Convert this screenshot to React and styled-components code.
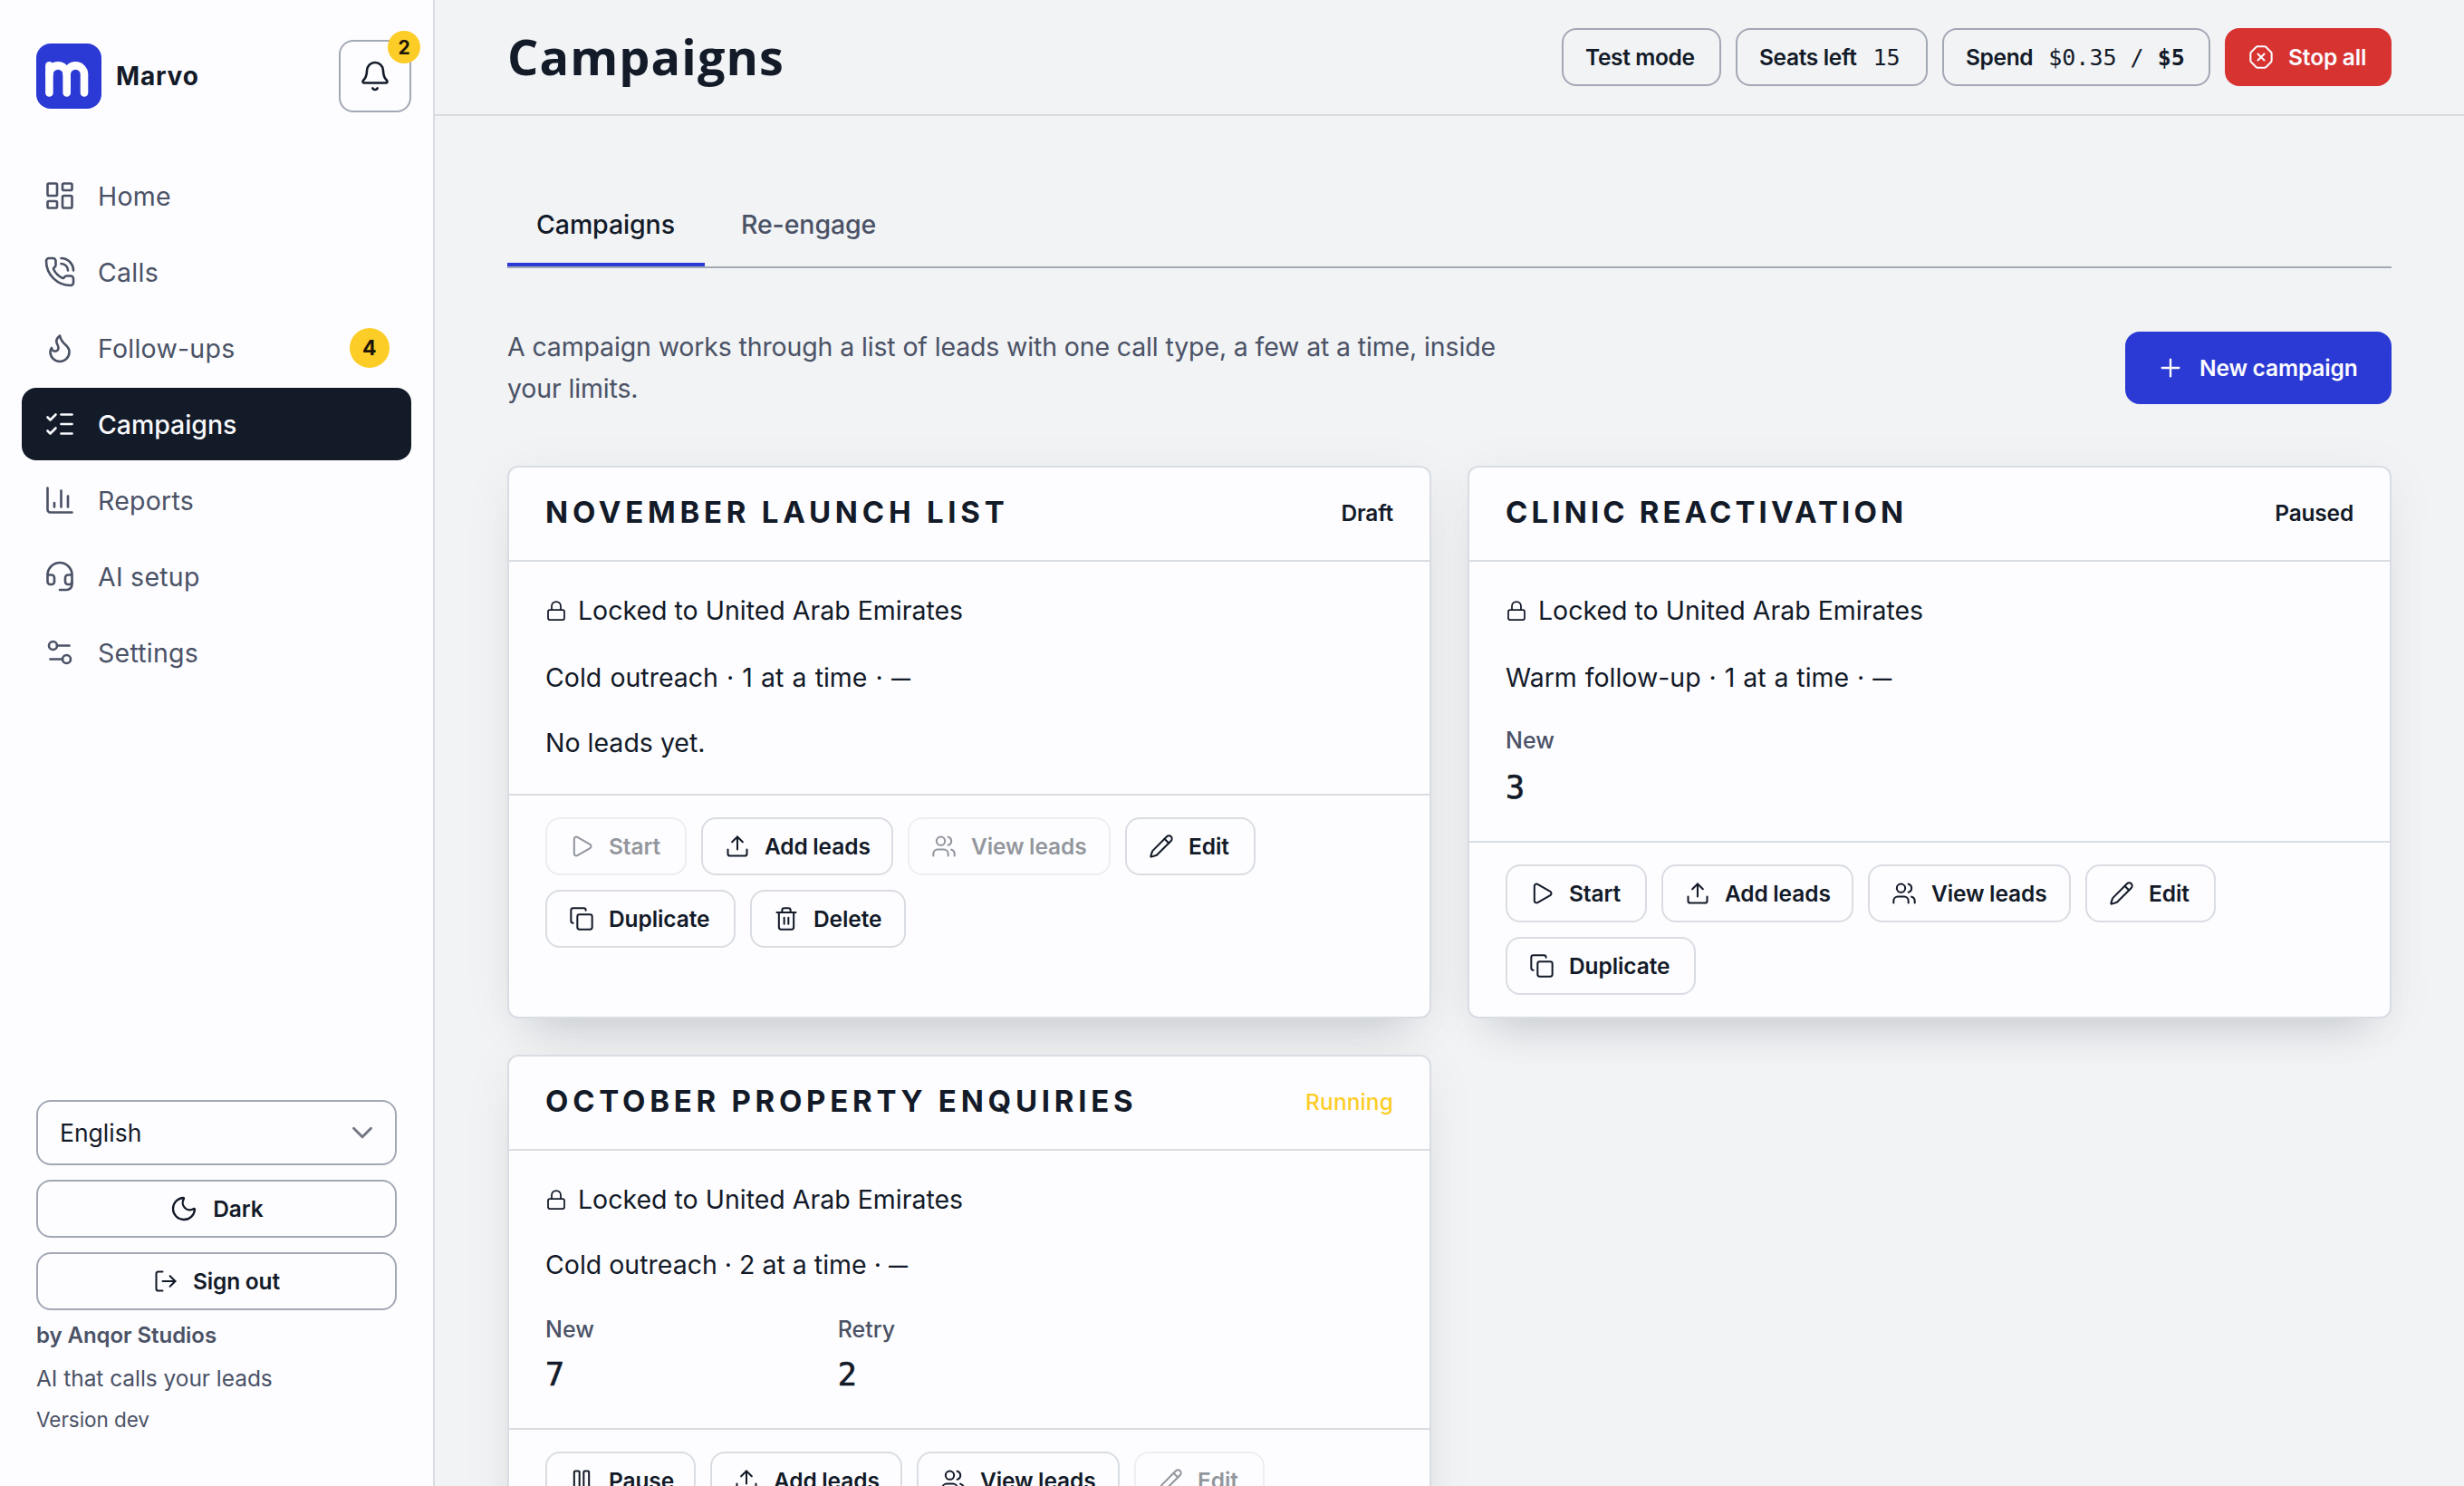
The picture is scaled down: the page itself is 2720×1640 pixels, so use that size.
import React from "react";
import styled, { createGlobalStyle, css } from "styled-components";
import {
  Bell,
  ChartColumn,
  ChevronDown,
  Copy,
  Flame,
  Headset,
  LayoutDashboard,
  ListChecks,
  Lock,
  LogOut,
  Moon,
  OctagonX,
  Pause,
  Pencil,
  PhoneCall,
  Play,
  Plus,
  Settings2,
  Trash2,
  Upload,
  Users,
} from "lucide-react";

const c = {
  ink: "#131a28",
  muted: "#4b5266",
  page: "#f1f3f5",
  surface: "#fdfdff",
  line: "#d9dde3",
  lineStrong: "#a3a8b5",
  brand: "#2b3ad4",
  danger: "#d73331",
  accent: "#fccd27",
};

const sans = `Inter, "Liberation Sans", sans-serif`;
const mono = `"DejaVu Sans Mono", "Liberation Mono", monospace`;

const GlobalStyle = createGlobalStyle`
  *, *::before, *::after { box-sizing: border-box; }
  body { margin: 0; background: ${c.page}; color: ${c.ink}; font-family: ${sans}; }
  button { font: inherit; color: inherit; background: none; margin: 0; }
  p, h1, h2, dl, dt, dd { margin: 0; }
  svg { flex: none; display: block; }
`;

const Shell = styled.div`
  display: grid;
  grid-template-columns: 480px 1fr;
  grid-template-rows: minmax(0, 1fr);
  height: 1640px;
  overflow: hidden;
`;

/* Sidebar */

const Sidebar = styled.aside`
  display: flex;
  flex-direction: column;
  background: ${c.surface};
  border-right: 2px solid ${c.line};
`;

const BrandRow = styled.div`
  display: flex;
  align-items: center;
  gap: 16px;
  padding: 44px 24px 0 40px;
`;

const BrandName = styled.span`
  flex: 1;
  font-size: 28px;
  font-weight: 700;
  letter-spacing: 0.8px;
`;

const BellButton = styled.button`
  position: relative;
  display: grid;
  place-items: center;
  width: 80px;
  height: 80px;
  padding: 0;
  border: 2px solid ${c.lineStrong};
  border-radius: 16px;
`;

const Count = styled.span`
  display: grid;
  place-items: center;
  width: ${(p) => p.$size}px;
  height: ${(p) => p.$size}px;
  border-radius: 50%;
  background: ${c.accent};
  color: #1c1608;
  font-weight: 700;
  font-size: ${(p) => p.$font}px;
  line-height: 1;
  ${(p) =>
    p.$floating &&
    css`
      position: absolute;
      top: -12px;
      right: -12px;
    `}
`;

const Nav = styled.nav`
  display: flex;
  flex-direction: column;
  gap: 4px;
  padding: 52px 24px 0;
`;

const NavItem = styled.a`
  display: flex;
  align-items: center;
  gap: 24px;
  height: 80px;
  padding: 0 24px;
  border-radius: 16px;
  font-size: 28.5px;
  letter-spacing: 0.25px;
  color: ${c.muted};
  ${(p) =>
    p.$active &&
    css`
      background: ${c.ink};
      color: #f7f8fb;
      font-weight: 500;
      letter-spacing: -0.05px;
    `}
`;

const NavLabel = styled.span`
  flex: 1;
`;

const SidebarFoot = styled.div`
  display: flex;
  flex-direction: column;
  gap: 16px;
  margin-top: auto;
  padding: 0 40px 52px;
`;

const LanguageSelect = styled.button`
  display: flex;
  align-items: center;
  justify-content: space-between;
  height: 72px;
  padding: 0 17px 0 24px;
  border: 2px solid ${c.lineStrong};
  border-radius: 16px;
  font-size: 26.5px;
  svg {
    color: #737783;
  }
`;

const Credits = styled.div`
  display: flex;
  flex-direction: column;
  color: ${c.muted};
  margin-top: -12px;
`;

const Credit = styled.span`
  font-size: ${(p) => p.$size}px;
  font-weight: ${(p) => p.$weight || 400};
  line-height: ${(p) => p.$line}px;
  letter-spacing: -0.05px;
`;

/* Buttons and pills */

const Button = styled.button`
  display: flex;
  align-items: center;
  justify-content: ${(p) => (p.$center ? "center" : "flex-start")};
  gap: 16px;
  height: 64px;
  width: ${(p) => (p.$width ? `${p.$width}px` : "auto")};
  padding: 0 0 0 ${(p) => (p.$center ? 0 : 24)}px;
  border: 2px solid ${(p) => (p.$strong ? c.lineStrong : c.line)};
  border-radius: 16px;
  font-size: 24.5px;
  font-weight: 600;
  letter-spacing: -0.1px;
  word-spacing: -0.5px;
  white-space: nowrap;
  ${(p) => p.disabled && "opacity: 0.45;"}
  ${(p) =>
    p.$tone &&
    css`
      background: ${p.$tone};
      border-color: ${p.$tone};
      color: #fbfbff;
    `}
`;

const PrimaryButton = styled(Button)`
  height: 80px;
  padding-left: 32px;
`;

const Pill = styled.div`
  display: flex;
  align-items: center;
  gap: ${(p) => p.$gap || 0}px;
  width: ${(p) => p.$width}px;
  height: 64px;
  padding-left: 24px;
  border: 2px solid ${c.lineStrong};
  border-radius: 16px;
  font-size: 24.5px;
  font-weight: 600;
  letter-spacing: -0.35px;
  white-space: nowrap;
`;

const Mono = styled.span`
  font-family: ${mono};
  font-size: 25px;
  font-weight: 400;
  letter-spacing: 0;
`;

/* Main column */

const Main = styled.main`
  display: flex;
  flex-direction: column;
  min-width: 0;
`;

const TopBar = styled.header`
  display: flex;
  align-items: center;
  gap: 16px;
  flex: none;
  height: 128px;
  padding: 0 80px;
  border-bottom: 2px solid ${c.line};
`;

const PageTitle = styled.h1`
  flex: 1;
  font-family: "Open Sans", ${sans};
  font-size: 54px;
  font-weight: 680;
  line-height: 1;
  letter-spacing: 1.1px;
  padding-bottom: 3px;
`;

const Content = styled.div`
  padding: 80px 80px 0;
`;

const Tabs = styled.div`
  display: flex;
  gap: 8px;
  height: 88px;
  border-bottom: 2px solid ${c.lineStrong};
`;

const Tab = styled.div`
  display: flex;
  align-items: center;
  width: ${(p) => p.$width}px;
  padding: 0 0 4px 32px;
  border-bottom: 4px solid ${(p) => (p.$active ? c.brand : "transparent")};
  color: ${(p) => (p.$active ? c.ink : c.muted)};
  font-size: 28.5px;
  font-weight: 500;
  letter-spacing: -0.1px;
`;

const Intro = styled.div`
  display: flex;
  align-items: center;
  justify-content: space-between;
  padding: 64px 0 62px;
`;

const IntroText = styled.p`
  width: 1120px;
  color: ${c.muted};
  font-size: 28.5px;
  line-height: 46px;
  letter-spacing: -0.14px;
`;

const CardGrid = styled.div`
  display: grid;
  grid-template-columns: 1fr 1fr;
  gap: 40px;
`;

const Card = styled.section`
  display: flex;
  flex-direction: column;
  background: ${c.surface};
  border: 2px solid ${c.line};
  border-radius: 12px;
  box-shadow: 0 8px 60px rgba(22, 24, 40, 0.05), 0 32px 48px -30px rgba(22, 24, 40, 0.19);
`;

const CardHead = styled.div`
  display: flex;
  align-items: center;
  justify-content: space-between;
  height: 104px;
  padding: 0 40px 4px;
  border-bottom: 2px solid ${c.line};
`;

const CardTitle = styled.h2`
  font-size: 33px;
  font-weight: 650;
  letter-spacing: ${(p) => p.$tracking}px;
  line-height: 1;
  text-transform: uppercase;
  white-space: nowrap;
`;

const Status = styled.span`
  padding-top: 2px;
  font-size: 24.5px;
  font-weight: ${(p) => (p.$live ? 500 : 600)};
  letter-spacing: ${(p) => (p.$live ? 0.1 : -0.2)}px;
  color: ${(p) => (p.$live ? c.accent : c.ink)};
`;

const CardBody = styled.div`
  padding: 31px 40px 33px;
`;

const Line = styled.p`
  display: flex;
  align-items: center;
  gap: 12px;
  margin-top: ${(p) => p.$gap || 0}px;
  font-size: 28.5px;
  line-height: 46px;
`;

const Summary = styled.p`
  margin-top: ${(p) => p.$gap}px;
  font-size: 28.5px;
  line-height: 46px;
  height: 46px;
  word-spacing: ${(p) => p.$words}px;
`;

const Dash = styled.span`
  font-size: 21px;
  font-weight: 600;
  line-height: 1;
  vertical-align: 2px;
`;

const Stats = styled.dl`
  display: grid;
  grid-template-columns: repeat(3, 1fr);
  gap: 32px;
  padding-bottom: 4px;
  margin-top: ${(p) => p.$gap}px;
`;

const StatLabel = styled.dt`
  color: ${c.muted};
  font-size: 25px;
  font-weight: 500;
  line-height: 36px;
`;

const StatValue = styled.dd`
  padding-top: ${(p) => p.$gap}px;
  font-family: ${mono};
  font-size: 35px;
  line-height: 44px;
  -webkit-text-stroke: 0.7px ${c.ink};
`;

const CardActions = styled.div`
  display: flex;
  flex-wrap: wrap;
  align-content: flex-start;
  gap: 16px;
  flex: 1;
  padding: 24px 40px;
  border-top: 2px solid ${c.line};
`;

const LogoMark = () => (
  <svg width="72" height="72" viewBox="0 0 72 72" aria-hidden="true">
    <rect width="72" height="72" rx="16" fill={c.brand} />
    <g fill="none" stroke="#fff" strokeWidth="8.6" strokeLinecap="round">
      <path d="M14.4 54.4V24.4" />
      <path d="M14.4 34a9.65 9.65 0 0 1 19.3 0v20.4" />
      <path d="M33.7 34a9.65 9.65 0 0 1 19.3 0v20.4" />
    </g>
  </svg>
);

const navItems = [
  { icon: LayoutDashboard, label: "Home" },
  { icon: PhoneCall, label: "Calls" },
  { icon: Flame, label: "Follow-ups", count: 4 },
  { icon: ListChecks, label: "Campaigns", active: true },
  { icon: ChartColumn, label: "Reports" },
  { icon: Headset, label: "AI setup" },
  { icon: Settings2, label: "Settings" },
];

const actions = {
  start: { icon: Play, label: "Start", width: 156 },
  pause: { icon: Pause, label: "Pause", width: 166 },
  add: { icon: Upload, label: "Add leads", width: 212 },
  view: { icon: Users, label: "View leads", width: 224 },
  edit: { icon: Pencil, label: "Edit", width: 144 },
  duplicate: { icon: Copy, label: "Duplicate", width: 210 },
  remove: { icon: Trash2, label: "Delete", width: 172 },
};

const campaigns = [
  {
    name: "November launch list",
    tracking: 4.75,
    status: "Draft",
    summary: "Cold outreach · 1 at a time ·",
    words: 1.1,
    gaps: [28, 26],
    stats: [],
    actions: ["start", "add", "view", "edit", "duplicate", "remove"],
    disabled: ["start", "view"],
  },
  {
    name: "Clinic reactivation",
    tracking: 4.1,
    status: "Paused",
    summary: "Warm follow-up · 1 at a time ·",
    words: 0.9,
    gaps: [28, 28, 12],
    stats: [["New", 3]],
    actions: ["start", "add", "view", "edit", "duplicate"],
    disabled: [],
  },
  {
    name: "October property enquiries",
    tracking: 4.73,
    status: "Running",
    live: true,
    summary: "Cold outreach · 2 at a time ·",
    words: 0,
    gaps: [26, 30, 10],
    stats: [["New", 7], ["Retry", 2]],
    actions: ["pause", "add", "view", "edit"],
    disabled: ["edit"],
  },
];

function CampaignCard({ data }) {
  return (
    <Card>
      <CardHead>
        <CardTitle $tracking={data.tracking}>{data.name}</CardTitle>
        <Status $live={data.live}>{data.status}</Status>
      </CardHead>
      <CardBody>
        <Line>
          <Lock size={24} strokeWidth={1.75} />
          Locked to United Arab Emirates
        </Line>
        <Summary $gap={data.gaps[0]} $words={data.words}>
          {data.summary} <Dash>—</Dash>
        </Summary>
        {data.stats.length === 0 ? (
          <Line $gap={data.gaps[1]}>No leads yet.</Line>
        ) : (
          <Stats $gap={data.gaps[1]}>
            {data.stats.map(([label, value]) => (
              <div key={label}>
                <StatLabel>{label}</StatLabel>
                <StatValue $gap={data.gaps[2]}>{value}</StatValue>
              </div>
            ))}
          </Stats>
        )}
      </CardBody>
      <CardActions>
        {data.actions.map((key) => {
          const { icon: Icon, label, width } = actions[key];
          return (
            <Button key={key} $width={width} disabled={data.disabled.includes(key)}>
              <Icon size={28} strokeWidth={1.75} />
              {label}
            </Button>
          );
        })}
      </CardActions>
    </Card>
  );
}

export default function App() {
  return (
    <>
      <GlobalStyle />
      <Shell>
        <Sidebar>
          <BrandRow>
            <LogoMark />
            <BrandName>Marvo</BrandName>
            <BellButton aria-label="Notifications">
              <Bell size={36} strokeWidth={1.75} />
              <Count $size={36} $font={21} $floating>
                2
              </Count>
            </BellButton>
          </BrandRow>
          <Nav>
            {navItems.map(({ icon: Icon, label, count, active }) => (
              <NavItem key={label} $active={active}>
                <Icon size={36} strokeWidth={1.75} />
                <NavLabel>{label}</NavLabel>
                {count && (
                  <Count $size={44} $font={23}>
                    {count}
                  </Count>
                )}
              </NavItem>
            ))}
          </Nav>
          <SidebarFoot>
            <LanguageSelect>
              English
              <ChevronDown size={38} strokeWidth={1.9} />
            </LanguageSelect>
            <Button $strong $center>
              <Moon size={32} strokeWidth={1.75} />
              Dark
            </Button>
            <Button $strong $center>
              <LogOut size={28} strokeWidth={1.75} />
              Sign out
            </Button>
            <Credits>
              <Credit $size={24} $weight={600} $line={48}>
                by Anqor Studios
              </Credit>
              <Credit $size={24.5} $line={47}>
                AI that calls your leads
              </Credit>
              <Credit $size={22.5} $line={43}>
                Version dev
              </Credit>
            </Credits>
          </SidebarFoot>
        </Sidebar>
        <Main>
          <TopBar>
            <PageTitle>Campaigns</PageTitle>
            <Pill $width={176}>Test mode</Pill>
            <Pill $width={212} $gap={18}>
              Seats left <Mono>15</Mono>
            </Pill>
            <Pill $width={296} $gap={17}>
              Spend{" "}
              <Mono>
                $0.35 / <b>$5</b>
              </Mono>
            </Pill>
            <Button $width={184} $tone={c.danger}>
              <OctagonX size={28} strokeWidth={1.75} />
              Stop all
            </Button>
          </TopBar>
          <Content>
            <Tabs>
              <Tab $active $width={218}>
                Campaigns
              </Tab>
              <Tab $width={214}>Re-engage</Tab>
            </Tabs>
            <Intro>
              <IntroText>
                A campaign works through a list of leads with one call type, a few at a time,
                inside your limits.
              </IntroText>
              <PrimaryButton $width={294} $tone={c.brand}>
                <Plus size={32} strokeWidth={1.75} />
                New campaign
              </PrimaryButton>
            </Intro>
            <CardGrid>
              {campaigns.map((data) => (
                <CampaignCard key={data.name} data={data} />
              ))}
            </CardGrid>
          </Content>
        </Main>
      </Shell>
    </>
  );
}
